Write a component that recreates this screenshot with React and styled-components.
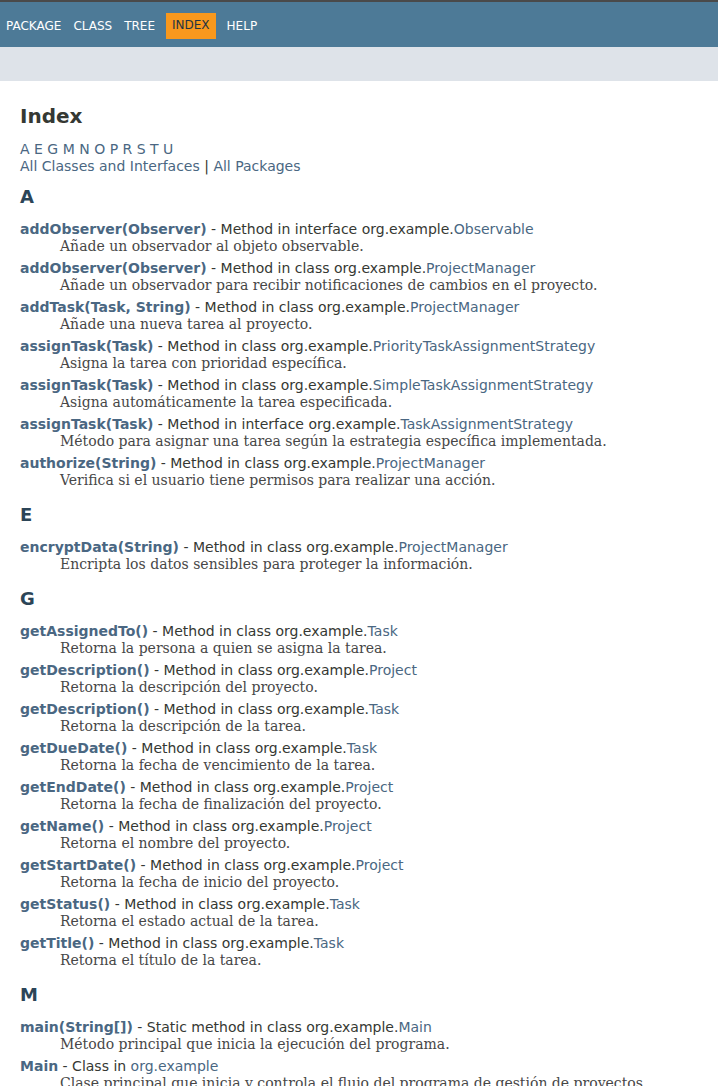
import React from "react";
import styled, { createGlobalStyle } from "styled-components";

const Global = createGlobalStyle`
  html, body { margin: 0; padding: 0; background: #ffffff; }
  body {
    color: #353833;
    font-family: "DejaVu Sans", Arial, Helvetica, sans-serif;
    font-size: 14px;
  }
`;

const TopStrip = styled.div`
  height: 2px;
  background: #4a4a4a;
`;

const TopNav = styled.nav`
  background: #4d7a97;
  color: #ffffff;
  height: 45px;
  padding-top: 12px;
  box-sizing: border-box;
  font-size: 12px;
`;

const NavList = styled.ul`
  display: flex;
  margin: 0;
  padding: 0;
  list-style: none;
`;

const NavItem = styled.li`
  padding: 5px 6px;
  line-height: 15px;
  text-transform: uppercase;
  background: ${(p) => (p.$active ? "#f8981d" : "transparent")};
  color: ${(p) => (p.$active ? "#253441" : "#ffffff")};
  margin: ${(p) => (p.$active ? "-1px 5px 0" : "0")};
  padding-bottom: ${(p) => (p.$active ? "5px" : "5px")};
`;

const SubNav = styled.div`
  background: #dee3e9;
  height: 34px;
`;

const Main = styled.main`
  padding: 0 20px 10px;
  overflow: hidden;
`;

const Title = styled.h1`
  font-size: 20px;
  line-height: 23px;
  margin: 24px 0 13px;
  color: #353833;
`;

const LetterLinks = styled.div`
  line-height: 17px;
`;

const Link = styled.a`
  color: #4a6782;
  text-decoration: none;
`;

const SectionTitle = styled.h2`
  font-size: 18px;
  line-height: 21px;
  color: #2c4557;
  margin: ${(p) => (p.$first ? "11px" : "15px")} 0 14px;
`;

const List = styled.dl`
  margin: 0;
`;

const Term = styled.dt`
  line-height: 17px;
`;

const MemberLink = styled.a`
  color: #4a6782;
  font-weight: bold;
  text-decoration: none;
`;

const Desc = styled.dd`
  margin: 0 0 5px 40px;
  line-height: 17px;
  font-family: "DejaVu Serif", Georgia, "Times New Roman", serif;
  color: #474747;
`;

const sections = [
  {
    letter: "A",
    items: [
      ["addObserver(Observer)", "Method in interface org.example.", "Observable", "Añade un observador al objeto observable."],
      ["addObserver(Observer)", "Method in class org.example.", "ProjectManager", "Añade un observador para recibir notificaciones de cambios en el proyecto."],
      ["addTask(Task, String)", "Method in class org.example.", "ProjectManager", "Añade una nueva tarea al proyecto."],
      ["assignTask(Task)", "Method in class org.example.", "PriorityTaskAssignmentStrategy", "Asigna la tarea con prioridad específica."],
      ["assignTask(Task)", "Method in class org.example.", "SimpleTaskAssignmentStrategy", "Asigna automáticamente la tarea especificada."],
      ["assignTask(Task)", "Method in interface org.example.", "TaskAssignmentStrategy", "Método para asignar una tarea según la estrategia específica implementada."],
      ["authorize(String)", "Method in class org.example.", "ProjectManager", "Verifica si el usuario tiene permisos para realizar una acción."],
    ],
  },
  {
    letter: "E",
    items: [
      ["encryptData(String)", "Method in class org.example.", "ProjectManager", "Encripta los datos sensibles para proteger la información."],
    ],
  },
  {
    letter: "G",
    items: [
      ["getAssignedTo()", "Method in class org.example.", "Task", "Retorna la persona a quien se asigna la tarea."],
      ["getDescription()", "Method in class org.example.", "Project", "Retorna la descripción del proyecto."],
      ["getDescription()", "Method in class org.example.", "Task", "Retorna la descripción de la tarea."],
      ["getDueDate()", "Method in class org.example.", "Task", "Retorna la fecha de vencimiento de la tarea."],
      ["getEndDate()", "Method in class org.example.", "Project", "Retorna la fecha de finalización del proyecto."],
      ["getName()", "Method in class org.example.", "Project", "Retorna el nombre del proyecto."],
      ["getStartDate()", "Method in class org.example.", "Project", "Retorna la fecha de inicio del proyecto."],
      ["getStatus()", "Method in class org.example.", "Task", "Retorna el estado actual de la tarea."],
      ["getTitle()", "Method in class org.example.", "Task", "Retorna el título de la tarea."],
    ],
  },
  {
    letter: "M",
    items: [
      ["main(String[])", "Static method in class org.example.", "Main", "Método principal que inicia la ejecución del programa."],
      ["Main", "Class in ", "org.example", "Clase principal que inicia y controla el flujo del programa de gestión de proyectos."],
    ],
  },
];

const letters = ["A", "E", "G", "M", "N", "O", "P", "R", "S", "T", "U"];

export default function App() {
  return (
    <>
      <Global />
      <TopStrip />
      <TopNav>
        <NavList>
          <NavItem>Package</NavItem>
          <NavItem>Class</NavItem>
          <NavItem>Tree</NavItem>
          <NavItem $active>Index</NavItem>
          <NavItem>Help</NavItem>
        </NavList>
      </TopNav>
      <SubNav />
      <Main>
        <Title>Index</Title>
        <LetterLinks>
          <div>
            {letters.map((l, i) => (
              <React.Fragment key={l}>
                <Link href="#">{l}</Link>
                {i < letters.length - 1 ? " " : null}
              </React.Fragment>
            ))}
          </div>
          <div>
            <Link href="#">All Classes and Interfaces</Link> | <Link href="#">All Packages</Link>
          </div>
        </LetterLinks>
        {sections.map((s, si) => (
          <section key={s.letter}>
            <SectionTitle $first={si === 0}>{s.letter}</SectionTitle>
            <List>
              {s.items.map(([name, kind, target, desc], i) => (
                <React.Fragment key={i}>
                  <Term>
                    <MemberLink href="#">{name}</MemberLink> - {kind}
                    <Link href="#">{target}</Link>
                  </Term>
                  <Desc>{desc}</Desc>
                </React.Fragment>
              ))}
            </List>
          </section>
        ))}
      </Main>
    </>
  );
}
